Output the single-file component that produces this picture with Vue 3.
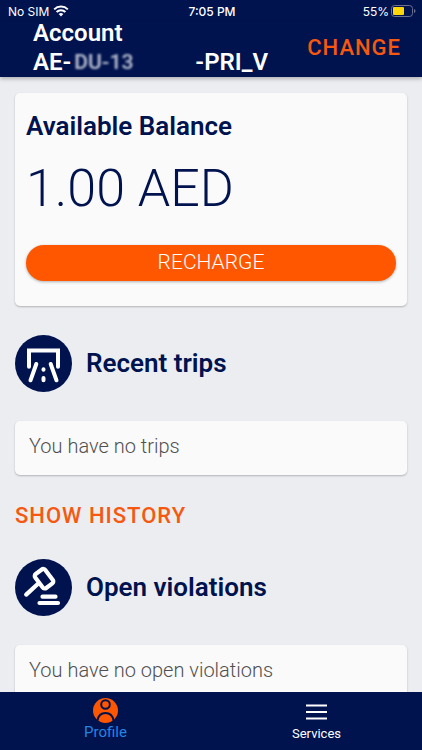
<script setup>
const account = { prefix: 'AE-', masked: 'DU-13', suffix: '-PRI_V' }
const balance = '1.00 AED'
</script>

<template>
  <div class="app">
    <div class="status">
      <div class="status-left">
        <span>No SIM</span>
        <svg class="wifi" viewBox="0 0 16 12" aria-hidden="true">
          <path d="M1.2 4.4a9.7 9.7 0 0 1 13.6 0" />
          <path d="M3.6 7a6.2 6.2 0 0 1 8.8 0" />
          <path class="dot" d="M5.7 9.1a3.3 3.3 0 0 1 4.6 0L8 11.6z" />
        </svg>
      </div>
      <span class="time">7:05 PM</span>
      <div class="status-right">
        <span>55%</span>
        <svg class="battery" viewBox="0 0 25 12" aria-hidden="true">
          <rect x="0.5" y="0.5" width="21" height="11" rx="3" fill="none" stroke="#6a7191" />
          <rect x="2" y="2" width="11" height="8" rx="1" fill="#ffd60a" />
          <path d="M23 4v4q1.500-.6 1.500-2T23 4z" fill="#6a7191" />
        </svg>
      </div>
    </div>

    <header class="header">
      <h1 class="account">
        <span>Account</span>
        <span class="number">{{ account.prefix }}<span class="masked">{{ account.masked }}</span>{{ account.suffix }}</span>
      </h1>
      <button class="text-button" type="button">CHANGE</button>
    </header>

    <main class="content">
      <section class="card balance">
        <h2 class="title">Available Balance</h2>
        <p class="amount">{{ balance }}</p>
        <button class="recharge" type="button">RECHARGE</button>
      </section>

      <section class="group">
        <div class="heading">
          <svg class="badge" viewBox="0 0 57 57" aria-hidden="true">
            <circle cx="28.500" cy="28.500" r="28.500" fill="#00134f" />
            <g fill="none" stroke="#fff" stroke-linecap="round" stroke-width="4">
              <path d="M14 31.800V15.500H43V31.800" />
              <path d="M21.300 29L15.500 45.300M35.700 29L41.500 45.300" />
              <path d="M28.500 34.200v.6M28.500 43v2.300" />
            </g>
          </svg>
          <h2 class="title">Recent trips</h2>
        </div>
        <p class="card message">You have no trips</p>
        <button class="text-button history" type="button">SHOW HISTORY</button>
      </section>

      <section class="group">
        <div class="heading">
          <svg class="badge" viewBox="0 0 57 57" aria-hidden="true">
            <circle cx="28.500" cy="28.500" r="28.500" fill="#00134f" />
            <g fill="none" stroke="#fff" stroke-linecap="round" stroke-width="4.200">
              <rect x="22.700" y="11" width="12.600" height="17.500" rx="2.500" transform="rotate(-37 29 19.700)" />
              <path d="M23 24.800L11.200 35.600" />
              <path d="M27.500 37.700H40.500M24.500 44H43" />
            </g>
          </svg>
          <h2 class="title">Open violations</h2>
        </div>
        <p class="card message">You have no open violations</p>
      </section>
    </main>

    <nav class="tabs">
      <a class="tab active" href="#profile">
        <svg class="person" viewBox="0 0 25 25" aria-hidden="true">
          <circle cx="12.500" cy="12.500" r="12.500" fill="#ff5600" />
          <g fill="none" stroke="#00134f" stroke-width="2">
            <circle cx="12.500" cy="6.500" r="4.300" />
            <path d="M4.500 22.500C5.300 17.700 8.500 15 12.500 15s7.200 2.700 8 7.500" />
          </g>
        </svg>
        <span>Profile</span>
      </a>
      <a class="tab" href="#services">
        <svg class="menu" viewBox="0 0 21 16" aria-hidden="true">
          <path d="M0 1.500H21M0 8H21M0 14.500H21" stroke="#fff" stroke-width="2" />
        </svg>
        <span>Services</span>
      </a>
    </nav>
  </div>
</template>

<style>
body {
  margin: 0;
}
</style>

<style scoped>
.app {
  display: flex;
  flex-direction: column;
  height: 100vh;
  overflow: hidden;
  background: #ecedf1;
  color: #00134f;
  font-family: Roboto, "Liberation Sans", sans-serif;
}

h1,
h2,
p {
  margin: 0;
}

button {
  border: 0;
  padding: 0;
  background: none;
  font-family: inherit;
  cursor: pointer;
}

.status {
  display: grid;
  grid-template-columns: 1fr auto 1fr;
  align-items: center;
  height: 22px;
  padding: 0 6px 0 8px;
  background: #00134f;
  color: #fff;
  font-family: Inter, sans-serif;
  font-size: 12px;
  flex: none;
}

.status-left,
.status-right {
  display: flex;
  align-items: center;
  gap: 4px;
}

.status-right {
  justify-content: flex-end;
  gap: 2px;
}

.time {
  font-weight: 500;
}

.wifi {
  width: 16px;
  height: 12px;
  fill: none;
  stroke: #fff;
  stroke-width: 2;
}

.wifi .dot {
  fill: #fff;
  stroke: none;
}

.battery {
  width: 25px;
  height: 12px;
}

.header {
  position: relative;
  display: flex;
  justify-content: space-between;
  align-items: center;
  flex: none;
  box-sizing: border-box;
  height: 55px;
  padding: 0 21px 4px 33px;
  background: #00134f;
  box-shadow: 0 2px 4px rgba(0, 0, 0, 0.25);
}

.account {
  display: flex;
  flex-direction: column;
  color: #fff;
  font-size: 24px;
  font-weight: 600;
  line-height: 29px;
}

.number {
  display: flex;
  align-items: center;
}

.masked {
  width: 121px;
  padding-left: 3px;
  font-size: 21px;
  filter: blur(1px);
  opacity: 0.7;
}

.text-button {
  color: #f7580f;
  font-size: 22px;
  font-weight: 500;
  line-height: 26px;
  letter-spacing: 1px;
}

.content {
  display: flex;
  flex-direction: column;
  flex: 1;
  min-height: 0;
  gap: 29px;
  padding: 16px 15px 0;
  overflow-y: auto;
  scrollbar-width: none;
}

.card {
  border-radius: 5px;
  background: #fafafa;
  box-shadow: 0 1px 2px rgba(0, 0, 0, 0.25);
}

.balance {
  display: flex;
  flex-direction: column;
  flex: none;
  padding: 17px 11px 25px;
}

.title {
  font-size: 26px;
  font-weight: 600;
  line-height: 32px;
}

.amount {
  padding: 15px 0 24px;
  font-size: 52px;
  font-weight: 300;
  line-height: 64px;
}

.recharge {
  height: 36px;
  padding-bottom: 3px;
  border-radius: 18px;
  background: #ff5600;
  box-shadow: 0 1px 3px rgba(0, 0, 0, 0.3);
  color: #fff;
  font-size: 21px;
  font-weight: 300;
}

.group {
  display: flex;
  flex-direction: column;
  flex: none;
}

.heading {
  display: flex;
  align-items: center;
  gap: 14px;
  margin-bottom: 29px;
}

.heading .title {
  padding-bottom: 2px;
}

.badge {
  width: 57px;
  height: 57px;
}

.message {
  padding: 11px 14px 15px;
  color: #505050;
  font-size: 20px;
  font-weight: 300;
  line-height: 28px;
}

.history {
  align-self: flex-start;
  margin: 28px 0 1px;
}

.tabs {
  display: grid;
  grid-template-columns: 1fr 1fr;
  flex: none;
  height: 58px;
  background: #00134f;
}

.tab {
  display: flex;
  flex-direction: column;
  align-items: center;
  padding-top: 12px;
  gap: 6px;
  color: #fff;
  font-size: 13px;
  line-height: 16px;
  text-decoration: none;
}

.tab.active {
  padding-top: 6px;
  gap: 1px;
  color: #2684e4;
  font-size: 15px;
}

.person {
  width: 25px;
  height: 25px;
}

.menu {
  width: 21px;
  height: 16px;
}
</style>
